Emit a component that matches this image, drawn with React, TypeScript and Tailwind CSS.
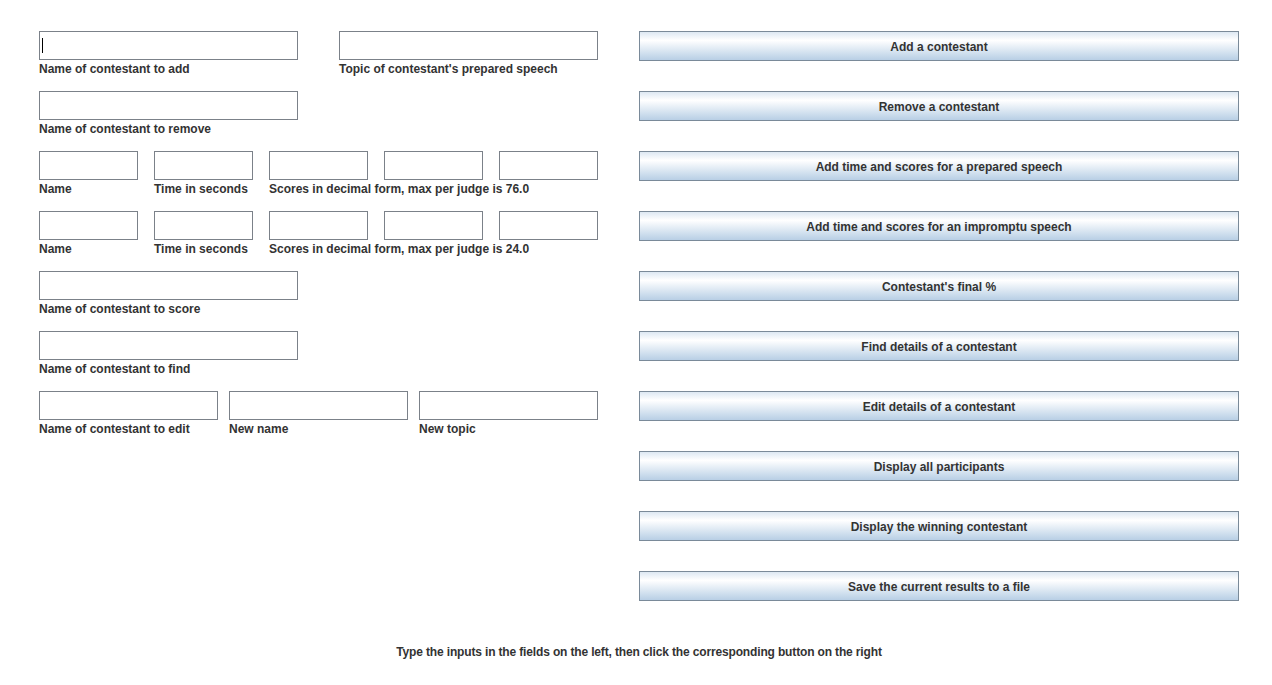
import { type ReactNode } from "react";

const font = "font-['Liberation_Sans',Arial,sans-serif]";

interface FieldProps {
  label?: string;
  className?: string;
  caret?: boolean;
}

const Field = ({ label, className = "w-[259px]", caret }: FieldProps) => (
  <div className={`flex flex-col ${className}`}>
    <div className="relative h-[29px] w-full border border-[#7b8189] bg-white">
      {caret && (
        <div className="absolute left-[2px] top-[6px] h-[15px] w-px bg-black" />
      )}
    </div>
    <span className="mt-[2px] h-[14px] whitespace-nowrap text-[12px] font-bold leading-[14px] text-[#333333]">
      {label}
    </span>
  </div>
);

const Row = ({ children }: { children: ReactNode }) => (
  <div className="flex h-[60px] items-start">{children}</div>
);

const buttons = [
  "Add a contestant",
  "Remove a contestant",
  "Add time and scores for a prepared speech",
  "Add time and scores for an impromptu speech",
  "Contestant's final %",
  "Find details of a contestant",
  "Edit details of a contestant",
  "Display all participants",
  "Display the winning contestant",
  "Save the current results to a file",
];

export default function App() {
  return (
    <div className={`${font} h-[685px] w-[1272px] bg-white`}>
      <div className="flex gap-[41px] pl-[39px] pt-[31px]">
        <div className="flex w-[559px] flex-col">
          <Row>
            <div className="flex gap-[41px]">
              <Field label="Name of contestant to add" caret />
              <Field label="Topic of contestant's prepared speech" />
            </div>
          </Row>
          <Row>
            <Field label="Name of contestant to remove" />
          </Row>
          <Row>
            <div className="flex gap-[16px]">
              <Field label="Name" className="w-[99px]" />
              <Field label="Time in seconds" className="w-[99px]" />
              <Field
                label="Scores in decimal form, max per judge is 76.0"
                className="w-[99px]"
              />
              <Field className="w-[99px]" />
              <Field className="w-[99px]" />
            </div>
          </Row>
          <Row>
            <div className="flex gap-[16px]">
              <Field label="Name" className="w-[99px]" />
              <Field label="Time in seconds" className="w-[99px]" />
              <Field
                label="Scores in decimal form, max per judge is 24.0"
                className="w-[99px]"
              />
              <Field className="w-[99px]" />
              <Field className="w-[99px]" />
            </div>
          </Row>
          <Row>
            <Field label="Name of contestant to score" />
          </Row>
          <Row>
            <Field label="Name of contestant to find" />
          </Row>
          <Row>
            <div className="flex gap-[11px]">
              <Field label="Name of contestant to edit" className="w-[179px]" />
              <Field label="New name" className="w-[179px]" />
              <Field label="New topic" className="w-[179px]" />
            </div>
          </Row>
        </div>
        <div className="flex w-[600px] flex-col gap-[30px]">
          {buttons.map((b) => (
            <button
              key={b}
              className="flex h-[30px] w-full items-center justify-center border border-[#7a8a99] bg-gradient-to-b from-[#dde8f3] via-white via-30% to-[#b8cfe5] pt-[2px] text-[12px] font-bold text-[#333333]"
            >
              {b}
            </button>
          ))}
        </div>
      </div>
      <div className="ml-[39px] mt-[44px] w-[1200px] text-center text-[12px] font-bold leading-[14px] tracking-[-0.15px] text-[#333333]">
        Type the inputs in the fields on the left, then click the corresponding
        button on the right
      </div>
    </div>
  );
}
